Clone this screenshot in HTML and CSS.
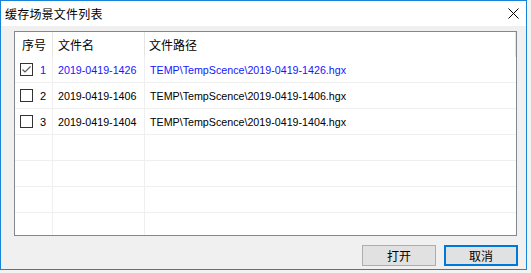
FILE: index.html
```html
<!DOCTYPE html>
<html lang="zh-CN">
<head>
    <meta charset="UTF-8">
    <title>缓存场景文件列表</title>
    <link rel="stylesheet" href="styles.css">
</head>
<body>
    <div class="window">

        <div class="titlebar">
            <span class="title">缓存场景文件列表</span>
            <svg class="close" width="11" height="11" viewBox="0 0 11 11">
                <path d="M0.5 0.5 L10.5 10.5 M10.5 0.5 L0.5 10.5" stroke="#000" stroke-width="1" fill="none"/>
            </svg>
        </div>

        <div class="content">
            <div class="list">
                <div class="row head">
                    <div class="cell c1">序号</div>
                    <div class="cell c2">文件名</div>
                    <div class="cell c3">文件路径</div>
                    <div class="cell c4"></div>
                </div>

                <div class="row selected">
                    <div class="cell c1">
                        <span class="box">
                            <svg width="11" height="11" viewBox="0 0 11 11">
                                <path d="M1.5 5.5 L4 8 L9.5 2.5" stroke="#5a5a5a" stroke-width="1.2" fill="none"/>
                            </svg>
                        </span>
                        <span class="num">1</span>
                    </div>
                    <div class="cell c2">2019-0419-1426</div>
                    <div class="cell c3">TEMP\TempScence\2019-0419-1426.hgx</div>
                    <div class="cell c4"></div>
                </div>

                <div class="row">
                    <div class="cell c1"><span class="box"></span><span class="num">2</span></div>
                    <div class="cell c2">2019-0419-1406</div>
                    <div class="cell c3">TEMP\TempScence\2019-0419-1406.hgx</div>
                    <div class="cell c4"></div>
                </div>

                <div class="row">
                    <div class="cell c1"><span class="box"></span><span class="num">3</span></div>
                    <div class="cell c2">2019-0419-1404</div>
                    <div class="cell c3">TEMP\TempScence\2019-0419-1404.hgx</div>
                    <div class="cell c4"></div>
                </div>

                <!-- empty rows to fill the list -->
                <div class="row"><div class="cell c1"></div><div class="cell c2"></div><div class="cell c3"></div><div class="cell c4"></div></div>
                <div class="row"><div class="cell c1"></div><div class="cell c2"></div><div class="cell c3"></div><div class="cell c4"></div></div>
                <div class="row"><div class="cell c1"></div><div class="cell c2"></div><div class="cell c3"></div><div class="cell c4"></div></div>
                <div class="row"><div class="cell c1"></div><div class="cell c2"></div><div class="cell c3"></div><div class="cell c4"></div></div>
            </div>

            <div class="buttons">
                <button class="btn">打开</button>
                <button class="btn default">取消</button>
            </div>
        </div>

    </div>
</body>
</html>
```

FILE: styles.css
```css
* {
    margin: 0;
    padding: 0;
    box-sizing: border-box;
}

body {
    background: #f3f3f3;
    font-family: "Noto Sans CJK SC", sans-serif;
    font-size: 12px;
    color: #000;
}

.window {
    width: 527px;
    height: 270px;
    border: 1px solid #1883d7;
    background: #f0f0f0;
    display: flex;
    flex-direction: column;
}

.titlebar {
    height: 25px;
    background: #fff;
    display: flex;
    align-items: center;
    justify-content: space-between;
    padding-left: 4px;
    padding-right: 7px;
}

.title {
    font-size: 12px;
    line-height: 14px;
    letter-spacing: 0.2px;
}

.close {
    display: block;
}

.content {
    padding: 5px 8px 0 13px;
}

.list {
    width: 503px;
    height: 205px;
    border: 1px solid #828790;
    background: #fff;
    overflow: hidden;
}

.row {
    display: grid;
    grid-template-columns: 38px 92px 371px 1fr;
    height: 26px;
}

.row.head {
    height: 25px;
}

.cell {
    display: flex;
    align-items: center;
    border-right: 1px solid #efefef;
    border-bottom: 1px solid #efefef;
    white-space: nowrap;
    overflow: hidden;
    font-family: "Liberation Sans", "Noto Sans CJK SC", sans-serif;
    font-size: 10.7px;
}

.row.head .cell {
    border-bottom: none;
    border-right-color: #e5e5e5;
    font-family: "Noto Sans CJK SC", sans-serif;
    font-size: 12px;
}

.row .c3 {
    border-right: none;
}

.row.head .c3 {
    border-right: 1px solid #e5e5e5;
}

.row .c4 {
    border-right: none;
}

.c1 {
    padding-left: 5px;
}

.row.head .c1 {
    padding-left: 7px;
}

.c2 {
    padding-left: 5px;
}

.c3 {
    padding-left: 5px;
}

.row.head .c3 {
    padding-left: 4px;
}

.box {
    width: 13px;
    height: 13px;
    border: 1px solid #333;
    display: flex;
    align-items: center;
    justify-content: center;
    margin-right: 7px;
    background: #fff;
}

.box svg {
    display: block;
}

.num {
    font-size: 11px;
}

.selected .cell {
    color: #1515ff;
}

.buttons {
    display: flex;
    justify-content: flex-end;
    gap: 8px;
    margin-top: 9px;
}

.btn {
    width: 74px;
    height: 21px;
    background: #e1e1e1;
    border: 1px solid #adadad;
    font-family: "Noto Sans CJK SC", sans-serif;
    font-size: 12px;
    color: #000;
}

.btn.default {
    border: 2px solid #0078d7;
}
```
